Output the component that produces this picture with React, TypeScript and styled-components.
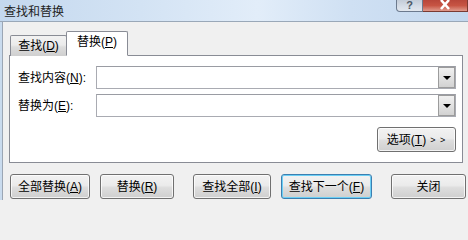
import React from 'react'
import styled, { createGlobalStyle } from 'styled-components'

const GlobalStyle = createGlobalStyle`
  html, body {
    margin: 0;
    padding: 0;
    background: #f0f0f0;
  }
  body {
    font-family: "Liberation Sans", "Noto Sans CJK SC", sans-serif;
    font-size: 12px;
    line-height: 16px;
    color: #000;
  }
  u {
    text-decoration: underline;
    text-underline-offset: 1px;
  }
`

const App = () => {
  return (
    <>
      <GlobalStyle />
      <Window>
        <TitleBar>
          <Title>查找和替换</Title>
          <CaptionButtons>
            <HelpButton>?</HelpButton>
            <CloseButton>
              <svg width="12" height="10" viewBox="0 0 12 10">
                <path d="M2 0 L10 9 M10 0 L2 9" stroke="#fff" strokeWidth="2.6" />
              </svg>
            </CloseButton>
          </CaptionButtons>
        </TitleBar>
        <Client>
          <TabStrip>
            <Tab>
              查找(<u>D</u>)
            </Tab>
            <Tab $active>
              替换(<u>P</u>)
            </Tab>
          </TabStrip>
          <Panel>
            <FieldRow>
              <Label>
                查找内容(<u>N</u>):
              </Label>
              <Combo>
                <ComboArrow />
              </Combo>
            </FieldRow>
            <FieldRow>
              <Label>
                替换为(<u>E</u>):
              </Label>
              <Combo>
                <ComboArrow />
              </Combo>
            </FieldRow>
            <OptionsRow>
              <Button $w={79}>
                选项(<u>T</u>) <Chevrons>&gt; &gt;</Chevrons>
              </Button>
            </OptionsRow>
          </Panel>
          <ButtonRow>
            <Button $w={80}>
              全部替换(<u>A</u>)
            </Button>
            <Button $w={74}>
              替换(<u>R</u>)
            </Button>
            <Button $w={78} $push>
              查找全部(<u>I</u>)
            </Button>
            <Button $w={91} $default>
              查找下一个(<u>F</u>)
            </Button>
            <Button $w={75} $push>
              关闭
            </Button>
          </ButtonRow>
        </Client>
      </Window>
    </>
  )
}

export default App

const Window = styled.div`
  width: 468px;
  height: 200px;
  overflow: hidden;
  background: #f0f0f0;
  display: flex;
  flex-direction: column;
  box-sizing: border-box;
`

const TitleBar = styled.div`
  height: 21px;
  flex-shrink: 0;
  display: flex;
  align-items: flex-start;
  background: linear-gradient(
    to right,
    #c4d8ee 0%,
    #d3e3f4 30%,
    #e2edf9 55%,
    #cfe0f3 75%,
    #c3d7ee 100%
  );
  border-bottom: 1px solid #9aa8b8;
`

const Title = styled.div`
  padding: 3px 0 0 4px;
  font-family: "Noto Sans CJK SC", sans-serif;
  font-size: 12px;
  line-height: 15px;
  color: #1e1e1e;
`

const CaptionButtons = styled.div`
  margin-left: auto;
  display: flex;
  height: 13px;
`

const HelpButton = styled.div`
  width: 27px;
  height: 12px;
  box-sizing: border-box;
  border: 1px solid #6c7a8e;
  border-top: none;
  border-bottom-left-radius: 4px;
  background: linear-gradient(to bottom, #c3ccd8 0%, #d7dee8 60%, #e2e7ee 100%);
  color: #4d5866;
  font-size: 11px;
  line-height: 11px;
  text-align: center;
  font-weight: bold;
`

const CloseButton = styled.div`
  width: 45px;
  height: 12px;
  box-sizing: border-box;
  border: 1px solid #7a3a32;
  border-top: none;
  border-left: none;
  background: linear-gradient(to bottom, #b8463a 0%, #c75443 50%, #e09a8c 100%);
  display: flex;
  justify-content: center;
  align-items: flex-start;
  svg {
    display: block;
  }
`

const Client = styled.div`
  flex: 1;
  display: flex;
  flex-direction: column;
  border-left: 2px solid #c9dbee;
  box-shadow: inset 1px 0 0 #9ba6b4;
  padding-top: 9px;
  padding-left: 1px;
`

const TabStrip = styled.div`
  display: flex;
  align-items: flex-end;
  margin-left: 7px;
  margin-bottom: -1px;
  position: relative;
  z-index: 1;
`

const Tab = styled.div<{ $active?: boolean }>`
  box-sizing: border-box;
  border: 1px solid #898c95;
  border-bottom: ${({ $active }) => ($active ? '1px solid #fff' : 'none')};
  border-radius: 2px 2px 0 0;
  text-align: center;
  white-space: nowrap;
  width: ${({ $active }) => ($active ? '62px' : '57px')};
  height: ${({ $active }) => ($active ? '25px' : '21px')};
  line-height: ${({ $active }) => ($active ? '21px' : '20px')};
  margin-left: ${({ $active }) => ($active ? '-1px' : '0')};
  background: ${({ $active }) =>
    $active
      ? '#fff'
      : 'linear-gradient(to bottom, #f2f2f2 0%, #ebebeb 45%, #dddddd 55%, #cfcfcf 100%)'};
`

const Panel = styled.div`
  margin: 0 5px 0 6px;
  height: 108px;
  box-sizing: border-box;
  border: 1px solid #898c95;
  background: #fff;
  padding: 10px 6px 0 8px;
  display: flex;
  flex-direction: column;
  gap: 5px;
`

const FieldRow = styled.div`
  display: flex;
  align-items: center;
  height: 23px;
`

const Label = styled.div`
  width: 78px;
  flex-shrink: 0;
  white-space: nowrap;
`

const Combo = styled.div`
  flex: 1;
  height: 23px;
  box-sizing: border-box;
  border: 1px solid #a9abb2;
  border-top-color: #9a9ca3;
  background: #fff;
  display: flex;
  justify-content: flex-end;
`

const ComboArrow = styled.div`
  width: 17px;
  height: 21px;
  box-sizing: border-box;
  border: 1px solid #9c9c9c;
  background: linear-gradient(to bottom, #f0f0f0 0%, #e2e2e2 50%, #d2d2d2 100%);
  display: flex;
  align-items: center;
  justify-content: center;
  &::after {
    content: '';
    width: 0;
    height: 0;
    border-left: 4px solid transparent;
    border-right: 4px solid transparent;
    border-top: 4px solid #000;
    margin-top: 1px;
  }
`

const OptionsRow = styled.div`
  display: flex;
  justify-content: flex-end;
  margin-top: 5px;
`

const Chevrons = styled.span`
  font-size: 9px;
  letter-spacing: 1px;
  margin-left: 4px;
`

const Button = styled.div<{ $w: number; $default?: boolean; $push?: boolean }>`
  width: ${({ $w }) => $w}px;
  height: 25px;
  box-sizing: border-box;
  margin-left: ${({ $push }) => ($push ? '9px' : '0')};
  border: 1px solid ${({ $default }) => ($default ? '#3c7fb1' : '#707070')};
  border-radius: 3px;
  background: linear-gradient(to bottom, #f2f2f2 0%, #ebebeb 45%, #dddddd 55%, #cfcfcf 100%);
  box-shadow: inset 0 0 0 1px
    ${({ $default }) => ($default ? '#6ccff5' : 'rgba(255, 255, 255, 0.75)')};
  display: flex;
  align-items: center;
  justify-content: center;
  white-space: nowrap;
  flex-shrink: 0;
`

const ButtonRow = styled.div`
  display: flex;
  gap: 10px;
  margin: 11px 0 0 7px;
`
